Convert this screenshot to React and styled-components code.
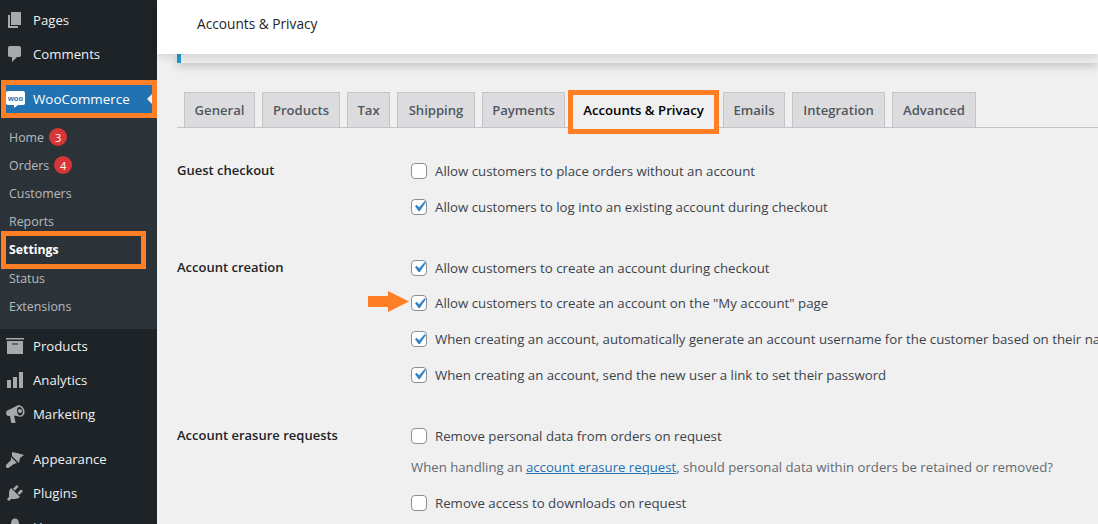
import React from 'react'
import styled, { createGlobalStyle } from 'styled-components'

const Global = createGlobalStyle`
  html, body { margin: 0; padding: 0; background: #f0f0f1; overflow: hidden; }
  * { box-sizing: border-box; }
`
const Page = styled.div`
  display: flex;
  width: 1098px;
  height: 524px;
  overflow: hidden;
  font-family: "Open Sans", "Noto Sans", sans-serif;
  font-size: 13px;
  color: #3c434a;
`
const Sidebar = styled.nav`
  width: 157px;
  flex-shrink: 0;
  background: #1d2327;
  height: 524px;
  overflow: hidden;
  padding-top: 3px;
`
const MenuItem = styled.div`
  display: flex;
  align-items: center;
  height: 34px;
  margin-bottom: ${p => p.$gap || 0}px;
  color: #f0f0f1;
  font-size: 13.2px;
  svg { width: 20px; height: 20px; margin: 0 8px 0 5px; flex-shrink: 0; fill: #a7aaad; }
`
const WooItem = styled.div`
  position: relative;
  display: flex;
  align-items: center;
  height: 38px;
  margin: 9px 0 0 1px;
  border: 5px solid #ff7f27;
  background: #2271b1;
  color: #fff;
  font-size: 13.4px;
  &::after {
    content: "";
    position: absolute;
    right: 0;
    top: 9px;
    border: 5px solid transparent;
    border-right: 5px solid #f0f0f1;
    border-left: 0;
  }
`
const WooLogo = styled.span`
  position: relative;
  display: flex;
  align-items: center;
  justify-content: center;
  width: 19px;
  height: 14px;
  margin: 0 8px 2px 0;
  background: #fff;
  border-radius: 2px;
  color: #2271b1;
  font: 700 7.5px "Liberation Sans", sans-serif;
  &::after {
    content: "";
    position: absolute;
    left: 8px;
    bottom: -3px;
    border-top: 3px solid #fff;
    border-right: 4px solid transparent;
  }
`
const Submenu = styled.div`
  background: #2c3338;
  height: 211px;
  padding-top: 5.2px;
`
const SubItem = styled.div`
  display: flex;
  align-items: center;
  gap: 5px;
  height: 28.2px;
  padding-left: 9px;
  color: rgba(240, 246, 252, 0.7);
  font-size: 12.4px;
`
const SettingsItem = styled.div`
  display: flex;
  align-items: center;
  width: 145px;
  height: 38px;
  margin: -5px 0 -5px 1px;
  padding-left: 3px;
  border: 5px solid #ff7f27;
  color: #fff;
  font-size: 12.3px;
  font-weight: 700;
`
const Badge = styled.span`
  display: flex;
  align-items: center;
  justify-content: center;
  width: 18px;
  height: 18px;
  border-radius: 50%;
  background: #d63638;
  color: #fff;
  font-size: 11px;
`
const Main = styled.main`
  flex: 1;
  min-width: 0;
`
const Header = styled.header`
  position: relative;
  z-index: 2;
  display: flex;
  align-items: center;
  height: 54px;
  padding: 0 0 7px 40px;
  background: #fff;
  color: #1d2327;
  font-size: 13.7px;
  box-shadow: 0 2px 10px rgba(0, 0, 0, 0.14);
`
const Notice = styled.div`
  height: 9px;
  margin-left: 20px;
  background: #eeeeef;
  border-left: 4px solid #1e9bd0;
  box-shadow: 0 3px 10px rgba(0, 0, 0, 0.2);
`
const Content = styled.div`
  padding: 29px 0 0 20px;
`
const TabBar = styled.div`
  display: flex;
  align-items: flex-end;
  height: 36px;
  padding-left: 7px;
  border-bottom: 1px solid #c3c4c7;
`
const Tab = styled.div`
  display: flex;
  align-items: center;
  justify-content: center;
  width: ${p => p.$w}px;
  height: 35px;
  margin-right: ${p => p.$mr ?? 7}px;
  background: #dcdcde;
  border: 1px solid #c3c4c7;
  border-bottom: 0;
  color: #50575e;
  font-size: 13.1px;
  font-weight: 600;
`
const ActiveTab = styled.div`
  position: relative;
  z-index: 1;
  display: flex;
  align-items: center;
  justify-content: center;
  width: 151px;
  height: 44px;
  margin: 0 4px -7px 3px;
  padding-bottom: 4px;
  background: #f0f0f1;
  border: 5px solid #ff7f27;
  color: #000;
  font-size: 13.2px;
  font-weight: 600;
`
const Sections = styled.div`
  display: flex;
  flex-direction: column;
  gap: 25.7px;
  padding-top: 33px;
`
const Section = styled.section`
  display: flex;
`
const SectionTitle = styled.h2`
  width: 234px;
  margin: 0;
  flex-shrink: 0;
  color: #1d2327;
  font-size: 13px;
  font-weight: 600;
  line-height: 18px;
`
const Options = styled.div`
  display: flex;
  flex-direction: column;
  min-width: 0;
`
const Option = styled.label`
  position: relative;
  display: flex;
  align-items: center;
  gap: 8px;
  height: 20px;
  margin-bottom: ${p => p.$mb ?? 15.6}px;
  white-space: nowrap;
  font-size: 13.25px;
`
const Box = styled.span`
  display: flex;
  align-items: center;
  justify-content: center;
  width: 16px;
  height: 16px;
  flex-shrink: 0;
  background: #fff;
  border: 1px solid #8c8f94;
  border-radius: 4px;
  svg { width: 21px; height: 21px; flex-shrink: 0; fill: #3582c4; }
`
const Arrow = styled.svg`
  position: absolute;
  left: -43px;
  top: -2px;
  width: 41px;
  height: 21px;
  fill: #ff7f27;
`
const Desc = styled.p`
  margin: 0 0 16px;
  height: 20px;
  line-height: 20px;
  white-space: nowrap;
  color: #646970;
  font-size: 13.2px;
  a { color: #2271b1; text-decoration: underline; }
`

const Pages = () => (
  <svg viewBox="0 0 20 20"><path d="M6 15V2h10v13H6zm-1 1h8v2H3V5h2v11z" /></svg>
)
const Comments = () => (
  <svg viewBox="0 0 20 20"><path d="M5 2h9q.82 0 1.41.59T16 4v7q0 .82-.59 1.41T14 13h-2l-5 5v-5H5q-.82 0-1.41-.59T3 11V4q0-.82.59-1.41T5 2z" /></svg>
)
const ProductsIcon = () => (
  <svg viewBox="0 0 20 20"><path d="M19 2v1.500H1V2h18zM2 5h16v13H2V5zm11 3.500V7.500H7v1h6z" fillRule="evenodd" /></svg>
)
const Analytics = () => (
  <svg viewBox="0 0 20 20"><path d="M18 18V2h-4v16h4zm-6 0V7H8v11h4zm-6 0v-8H2v8h4z" /></svg>
)
const Marketing = () => (
  <svg viewBox="0 0 20 20"><path fillRule="evenodd" d="M12.500 1.500C15 .5 19 3 19.500 7c.5 3.500-2 6-4.500 5.800L9 11.500l1.500 6.500c.1.600-.3 1-.8 1H7c-.5 0-.8-.3-.9-.8L5 12H3.500C2 12 1 10.500 1 9c0-1 .5-2 1.500-2.500l10-5zM14.500 3C12.500 3 12 5 12 7c0 2.500 1.500 4.500 3 4.500 2 0 3-2 2.800-4.500C17.600 5 16 3 14.500 3zm.5 2a2 2 0 1 1-.01 0z" /></svg>
)
const Appearance = () => (
  <svg viewBox="0 0 20 20"><path d="M7 3l5 1 7 2-4 3-1 5-7-7zM6 8l6 6-3 1-5 3.500c-1 1-2.500.500-3-.5-.5-1 0-2 1-3l4-4z" /></svg>
)
const PluginsIcon = () => (
  <svg viewBox="0 0 20 20"><path d="M13.110 4.360L9.870 7.600 8 5.730l3.240-3.240c.35-.34 1.050-.2 1.560.32.52.51.66 1.210.31 1.550zm-8 1.770l.91-1.120 9.010 9.010-1.190.84c-.71.71-2.630 1.160-3.820 1.160H6.140L4.900 17.260c-.59.59-1.540.59-2.120 0-.59-.58-.59-1.530 0-2.120l1.240-1.240v-3.880c0-1.130.4-3.190 1.090-3.890zm7.260 3.970l3.240-3.240c.34-.35 1.040-.21 1.550.31.52.51.66 1.210.31 1.550l-3.240 3.250z" /></svg>
)
const UsersIcon = () => (
  <svg viewBox="0 0 20 20"><path d="M10 1.500c2.200 0 4 2 4 4.500s-1.800 4.500-4 4.500S6 8.500 6 6s1.800-4.500 4-4.500zM3 17c0-3 3-5.500 7-5.500s7 2.500 7 5.500v2H3v-2z" /></svg>
)
const Tick = () => (
  <svg viewBox="0 0 20 20"><path d="M14.830 4.890l1.340.94-5.810 8.380H9.020L5.780 9.670l1.340-1.250 2.570 2.400z" /></svg>
)

const Check = ({ checked, children, mb, arrow }) => (
  <Option $mb={mb}>
    {arrow && (
      <Arrow viewBox="0 0 41 21"><path d="M0 5h20V0l21 10.500L20 21v-5H0z" /></Arrow>
    )}
    <Box>{checked && <Tick />}</Box>
    <span>{children}</span>
  </Option>
)

const tabsBefore = [
  ['General', 71],
  ['Products', 78],
  ['Tax', 43],
  ['Shipping', 78],
]
const tabsAfter = [
  ['Emails', 62],
  ['Integration', 93],
  ['Advanced', 84],
]

export default function App() {
  return (
    <Page>
      <Global />
      <Sidebar>
        <MenuItem><Pages />Pages</MenuItem>
        <MenuItem><Comments />Comments</MenuItem>
        <WooItem><WooLogo>woo</WooLogo>WooCommerce</WooItem>
        <Submenu>
          <SubItem>Home <Badge>3</Badge></SubItem>
          <SubItem>Orders <Badge>4</Badge></SubItem>
          <SubItem>Customers</SubItem>
          <SubItem>Reports</SubItem>
          <SettingsItem>Settings</SettingsItem>
          <SubItem>Status</SubItem>
          <SubItem>Extensions</SubItem>
        </Submenu>
        <MenuItem><ProductsIcon />Products</MenuItem>
        <MenuItem><Analytics />Analytics</MenuItem>
        <MenuItem $gap={11}><Marketing />Marketing</MenuItem>
        <MenuItem><Appearance />Appearance</MenuItem>
        <MenuItem><PluginsIcon />Plugins</MenuItem>
        <MenuItem><UsersIcon />Users</MenuItem>
      </Sidebar>
      <Main>
        <Header>Accounts &amp; Privacy</Header>
        <Notice />
        <Content>
          <TabBar>
            {tabsBefore.map(([t, w]) => <Tab key={t} $w={w}>{t}</Tab>)}
            <Tab $w={83} $mr={0}>Payments</Tab>
            <ActiveTab>Accounts &amp; Privacy</ActiveTab>
            {tabsAfter.map(([t, w]) => <Tab key={t} $w={w}>{t}</Tab>)}
          </TabBar>
          <Sections>
            <Section>
              <SectionTitle>Guest checkout</SectionTitle>
              <Options>
                <Check>Allow customers to place orders without an account</Check>
                <Check checked>Allow customers to log into an existing account during checkout</Check>
              </Options>
            </Section>
            <Section>
              <SectionTitle>Account creation</SectionTitle>
              <Options>
                <Check checked>Allow customers to create an account during checkout</Check>
                <Check checked arrow>Allow customers to create an account on the "My account" page</Check>
                <Check checked>When creating an account, automatically generate an account username for the customer based on their name, surname or email</Check>
                <Check checked>When creating an account, send the new user a link to set their password</Check>
              </Options>
            </Section>
            <Section>
              <SectionTitle>Account erasure requests</SectionTitle>
              <Options>
                <Check mb={11}>Remove personal data from orders on request</Check>
                <Desc>When handling an <a href="#erasure">account erasure request</a>, should personal data within orders be retained or removed?</Desc>
                <Check>Remove access to downloads on request</Check>
              </Options>
            </Section>
          </Sections>
        </Content>
      </Main>
    </Page>
  )
}
